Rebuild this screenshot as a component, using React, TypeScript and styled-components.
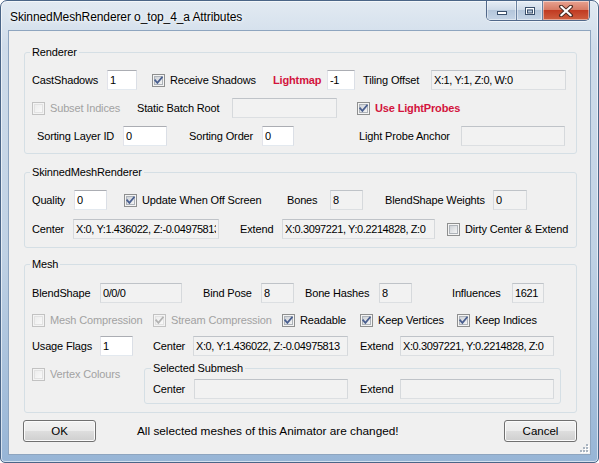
import React, { useId } from 'react';
import styled, { createGlobalStyle } from 'styled-components';

const GlobalStyle = createGlobalStyle`
  html, body {
    margin: 0;
    padding: 0;
    background: #ffffff;
  }

  body {
    font-family: "Liberation Sans", Arial, sans-serif;
    font-size: 11px;
    letter-spacing: -0.15px;
    color: #000;
  }

  * {
    box-sizing: border-box;
  }
`;

const Window = styled.div`
  width: 599px;
  height: 463px;
  display: flex;
  flex-direction: column;
  padding: 0 7px 7px;
  border: 1px solid #4a6587;
  border-radius: 7px 7px 5px 5px;
  background: linear-gradient(180deg, #e2eaf2 0%, #cfdcea 10%, #bfd1e4 55%, #97b5d6 100%);
  box-shadow: inset 0 0 0 1px rgba(255, 255, 255, 0.6);
`;

const TitleBar = styled.div`
  height: 29px;
  display: flex;
  align-items: flex-start;
  flex: none;
`;

const Title = styled.div`
  margin: 8px 0 0 2px;
  font-size: 12px;
  letter-spacing: -0.1px;
  line-height: 16px;
  color: #000;
  text-shadow: 0 0 6px #ffffff, 0 0 3px #ffffff;
`;

const CaptionGroup = styled.div`
  margin-left: auto;
  margin-right: 1px;
  display: flex;
  height: 20px;
  border: 1px solid #51688a;
  border-top: 0;
  border-radius: 0 0 5px 5px;
  overflow: hidden;
  box-shadow: 0 1px 0 rgba(255, 255, 255, 0.6);
`;

const CaptionButton = styled.div<{ $w: number; $close?: boolean }>`
  width: ${(p) => p.$w}px;
  display: flex;
  align-items: center;
  justify-content: center;
  background: ${(p) =>
    p.$close
      ? 'linear-gradient(180deg, #e8a291 0%, #d77c66 45%, #c13b22 50%, #cf5f40 100%)'
      : 'linear-gradient(180deg, #e6edf5 0%, #cfdbe9 45%, #b4c6db 50%, #c4d4e6 100%)'};
  box-shadow: inset 0 0 0 1px rgba(255, 255, 255, 0.45);

  & + & {
    border-left: 1px solid #6a81a0;
  }
`;

const Client = styled.div`
  flex: 1;
  position: relative;
  display: flex;
  flex-direction: column;
  border: 1px solid #8ea5bf;
  background: #f0f0f0;
  padding: 0 13px 0 15px;
`;

const GroupBox = styled.fieldset<{ $mt: number; $pt: number; $pb: number; $pl?: number; $w?: number }>`
  margin: ${(p) => p.$mt}px 0 0;
  padding: ${(p) => p.$pt}px 0 ${(p) => p.$pb}px ${(p) => p.$pl ?? 7}px;
  width: ${(p) => (p.$w ? `${p.$w}px` : 'auto')};
  min-width: 0;
  flex: none;
  display: flex;
  flex-direction: column;
  border: 1px solid #d5dfe5;
  border-radius: 3px;
`;

const Legend = styled.legend`
  margin-left: -2px;
  padding: 0 2px;
  line-height: 14px;
  font-size: 11px;
`;

const Row = styled.div<{ $mt?: number; $top?: boolean }>`
  display: flex;
  align-items: ${(p) => (p.$top ? 'flex-start' : 'center')};
  height: ${(p) => (p.$top ? 'auto' : '20px')};
  margin-top: ${(p) => p.$mt ?? 0}px;
`;

type Tone = 'normal' | 'muted' | 'accent';

const toneColor = (t?: Tone) => (t === 'muted' ? '#a2a2a2' : t === 'accent' ? '#d3143d' : '#000');

const Label = styled.span<{ $w?: number; $ml?: number; $tone?: Tone }>`
  flex: none;
  width: ${(p) => (p.$w ? `${p.$w}px` : 'auto')};
  margin-left: ${(p) => p.$ml ?? 0}px;
  line-height: 14px;
  white-space: nowrap;
  color: ${(p) => toneColor(p.$tone)};
  font-weight: ${(p) => (p.$tone === 'accent' ? 'bold' : 'normal')};
`;

const TextBox = styled.input<{ $w: number; $ml?: number; $locked?: boolean }>`
  flex: none;
  width: ${(p) => p.$w}px;
  height: 20px;
  margin: 0 0 0 ${(p) => p.$ml ?? 0}px;
  padding: 0 2px;
  font: inherit;
  font-size: 11px;
  letter-spacing: -0.4px;
  color: #000;
  outline: none;
  border: 1px solid;
  border-radius: 0;
  border-color: ${(p) => (p.$locked ? '#bfc3c8 #d6d9dc #dcdfe2 #d6d9dc' : '#abadb3 #dbdfe6 #e3e9ef #e2e3ea')};
  background: ${(p) => (p.$locked ? '#f2f2f2' : '#ffffff')};
`;

const CheckField = styled.label<{ $w?: number; $ml?: number; $mt?: number; $tone?: Tone }>`
  flex: none;
  display: flex;
  align-items: center;
  gap: 5px;
  width: ${(p) => (p.$w ? `${p.$w}px` : 'auto')};
  margin-left: ${(p) => p.$ml ?? 0}px;
  margin-top: ${(p) => p.$mt ?? 0}px;
  line-height: 14px;
  white-space: nowrap;
  color: ${(p) => toneColor(p.$tone)};
  font-weight: ${(p) => (p.$tone === 'accent' ? 'bold' : 'normal')};
`;

const ButtonBar = styled.div`
  display: flex;
  align-items: center;
  margin: 7px 0 0 -1px;
  height: 22px;
`;

const DialogButton = styled.button`
  width: 73px;
  height: 22px;
  padding: 0;
  font: inherit;
  font-size: 11.5px;
  color: #000;
  border: 1px solid #707070;
  border-radius: 3px;
  background: linear-gradient(180deg, #f2f2f2 0%, #ebebeb 48%, #dddddd 52%, #cfcfcf 100%);
  box-shadow: inset 0 0 0 1px #fbfbfb;

  &:last-child {
    margin-left: auto;
  }
`;

const Notice = styled.span`
  margin-left: 41px;
  font-size: 11.8px;
  letter-spacing: 0;
  white-space: nowrap;
`;

const SizeGrip = styled.svg`
  position: absolute;
  right: 1px;
  bottom: 1px;
`;

function Check({ checked, disabled }: { checked?: boolean; disabled?: boolean }) {
  const id = useId();
  return (
    <svg width="13" height="13" viewBox="0 0 13 13" style={{ flex: 'none' }}>
      <defs>
        <linearGradient id={id} x1="0" y1="0" x2="1" y2="1">
          <stop offset="0" stopColor={disabled ? '#ececec' : '#cbcfd5'} />
          <stop offset="1" stopColor={disabled ? '#fafafa' : '#f7f7f7'} />
        </linearGradient>
      </defs>
      <rect x="0.5" y="0.5" width="12" height="12" fill="#f4f4f4" stroke={disabled ? '#c2c2c2' : '#8e8f8f'} />
      <rect x="2.5" y="2.5" width="8" height="8" fill={`url(#${id})`} stroke={disabled ? '#e2e2e2' : '#aeb3b9'} />
      {checked && (
        <path
          d="M3.2 6.3 L5.4 8.8 L9.9 3.4"
          fill="none"
          stroke={disabled ? '#b3b3b3' : '#4a5f8f'}
          strokeWidth="1.8"
          strokeLinecap="square"
        />
      )}
    </svg>
  );
}

function CaptionButtons() {
  return (
    <CaptionGroup>
      <CaptionButton $w={29}>
        <svg width="12" height="10" viewBox="0 0 12 10">
          <rect x="1.5" y="5.5" width="9" height="3" fill="#ffffff" stroke="#3a4f6b" />
        </svg>
      </CaptionButton>
      <CaptionButton $w={26}>
        <svg width="12" height="10" viewBox="0 0 12 10">
          <rect x="1.5" y="1.5" width="9" height="7" fill="none" stroke="#3a4f6b" />
          <rect x="2.5" y="2.5" width="7" height="5" fill="none" stroke="#ffffff" />
          <rect x="3.5" y="4" width="5" height="3" fill="none" stroke="#3a4f6b" />
        </svg>
      </CaptionButton>
      <CaptionButton $w={47} $close>
        <svg width="16" height="12" viewBox="0 0 16 12">
          <path d="M3 1.5 L13 10.5 M13 1.5 L3 10.5" stroke="#4a2a22" strokeWidth="4" strokeLinecap="round" />
          <path d="M3.3 1.8 L12.7 10.2 M12.7 1.8 L3.3 10.2" stroke="#ffffff" strokeWidth="2.2" strokeLinecap="round" />
        </svg>
      </CaptionButton>
    </CaptionGroup>
  );
}

export default function App() {
  return (
    <>
      <GlobalStyle />
      <Window>
        <TitleBar>
          <Title>SkinnedMeshRenderer o_top_4_a Attributes</Title>
          <CaptionButtons />
        </TitleBar>

        <Client>
          <GroupBox $mt={14} $pt={11} $pb={7}>
            <Legend>Renderer</Legend>
            <Row>
              <Label $w={75}>CastShadows</Label>
              <TextBox $w={30} defaultValue="1" />
              <CheckField $ml={15} $w={121}>
                <Check checked />
                Receive Shadows
              </CheckField>
              <Label $w={54} $tone="accent">Lightmap</Label>
              <TextBox $w={28} defaultValue="-1" />
              <Label $ml={8} $w={68}>Tiling Offset</Label>
              <TextBox $w={135} $locked readOnly value="X:1, Y:1, Z:0, W:0" />
            </Row>
            <Row $mt={8}>
              <CheckField $w={105} $tone="muted">
                <Check disabled />
                Subset Indices
              </CheckField>
              <Label $w={95}>Static Batch Root</Label>
              <TextBox $w={105} $locked readOnly value="" />
              <CheckField $ml={20} $tone="accent">
                <Check checked />
                Use LightProbes
              </CheckField>
            </Row>
            <Row $mt={8}>
              <Label $ml={5} $w={86}>Sorting Layer ID</Label>
              <TextBox $w={44} defaultValue="0" />
              <Label $ml={22} $w={73}>Sorting Order</Label>
              <TextBox $w={32} defaultValue="0" />
              <Label $ml={65} $w={102}>Light Probe Anchor</Label>
              <TextBox $w={104} $locked readOnly value="" />
            </Row>
          </GroupBox>

          <GroupBox $mt={11} $pt={11} $pb={8}>
            <Legend>SkinnedMeshRenderer</Legend>
            <Row>
              <Label $w={42}>Quality</Label>
              <TextBox $w={33} defaultValue="0" />
              <CheckField $ml={17} $w={163}>
                <Check checked />
                Update When Off Screen
              </CheckField>
              <Label $w={43}>Bones</Label>
              <TextBox $w={33} $locked readOnly value="8" />
              <Label $ml={22} $w={108}>BlendShape Weights</Label>
              <TextBox $w={34} $locked readOnly value="0" />
            </Row>
            <Row $mt={9}>
              <Label $w={41}>Center</Label>
              <TextBox $w={146} $locked readOnly value="X:0, Y:1.436022, Z:-0.04975813" />
              <Label $ml={21} $w={42}>Extend</Label>
              <TextBox $w={153} $locked readOnly value="X:0.3097221, Y:0.2214828, Z:0" />
              <CheckField $ml={12}>
                <Check />
                Dirty Center &amp; Extend
              </CheckField>
            </Row>
          </GroupBox>

          <GroupBox $mt={9} $pt={12} $pb={8}>
            <Legend>Mesh</Legend>
            <Row>
              <Label $w={68}>BlendShape</Label>
              <TextBox $w={82} $locked readOnly value="0/0/0" />
              <Label $ml={21} $w={58}>Bind Pose</Label>
              <TextBox $w={33} $locked readOnly value="8" />
              <Label $ml={11} $w={74}>Bone Hashes</Label>
              <TextBox $w={33} $locked readOnly value="8" />
              <Label $ml={40} $w={60}>Influences</Label>
              <TextBox $w={32} $locked readOnly value="1621" />
            </Row>
            <Row $mt={7}>
              <CheckField $w={121} $tone="muted">
                <Check disabled />
                Mesh Compression
              </CheckField>
              <CheckField $w={129} $tone="muted">
                <Check checked disabled />
                Stream Compression
              </CheckField>
              <CheckField $w={78}>
                <Check checked />
                Readable
              </CheckField>
              <CheckField $w={97}>
                <Check checked />
                Keep Vertices
              </CheckField>
              <CheckField>
                <Check checked />
                Keep Indices
              </CheckField>
            </Row>
            <Row $mt={6}>
              <Label $w={68}>Usage Flags</Label>
              <TextBox $w={33} defaultValue="1" />
              <Label $ml={20} $w={40}>Center</Label>
              <TextBox $w={155} $locked readOnly value="X:0, Y:1.436022, Z:-0.04975813" />
              <Label $ml={12} $w={40}>Extend</Label>
              <TextBox $w={154} $locked readOnly value="X:0.3097221, Y:0.2214828, Z:0" />
            </Row>
            <Row $mt={5} $top>
              <CheckField $w={112} $mt={6} $tone="muted">
                <Check disabled />
                Vertex Colours
              </CheckField>
              <GroupBox $mt={0} $pt={4} $pb={4} $pl={8} $w={417}>
                <Legend>Selected Submesh</Legend>
                <Row>
                  <Label $w={41}>Center</Label>
                  <TextBox $w={154} $locked readOnly value="" />
                  <Label $ml={12} $w={40}>Extend</Label>
                  <TextBox $w={154} $locked readOnly value="" />
                </Row>
              </GroupBox>
            </Row>
          </GroupBox>

          <ButtonBar>
            <DialogButton type="button">OK</DialogButton>
            <Notice>All selected meshes of this Animator are changed!</Notice>
            <DialogButton type="button">Cancel</DialogButton>
          </ButtonBar>

          <SizeGrip width="10" height="10" viewBox="0 0 10 10">
            {[
              [7, 1],
              [7, 4],
              [4, 4],
              [7, 7],
              [4, 7],
              [1, 7],
            ].map(([x, y]) => (
              <g key={`${x}-${y}`}>
                <rect x={x + 1} y={y + 1} width="2" height="2" fill="#ffffff" />
                <rect x={x} y={y} width="2" height="2" fill="#a9b4c0" />
              </g>
            ))}
          </SizeGrip>
        </Client>
      </Window>
    </>
  );
}
